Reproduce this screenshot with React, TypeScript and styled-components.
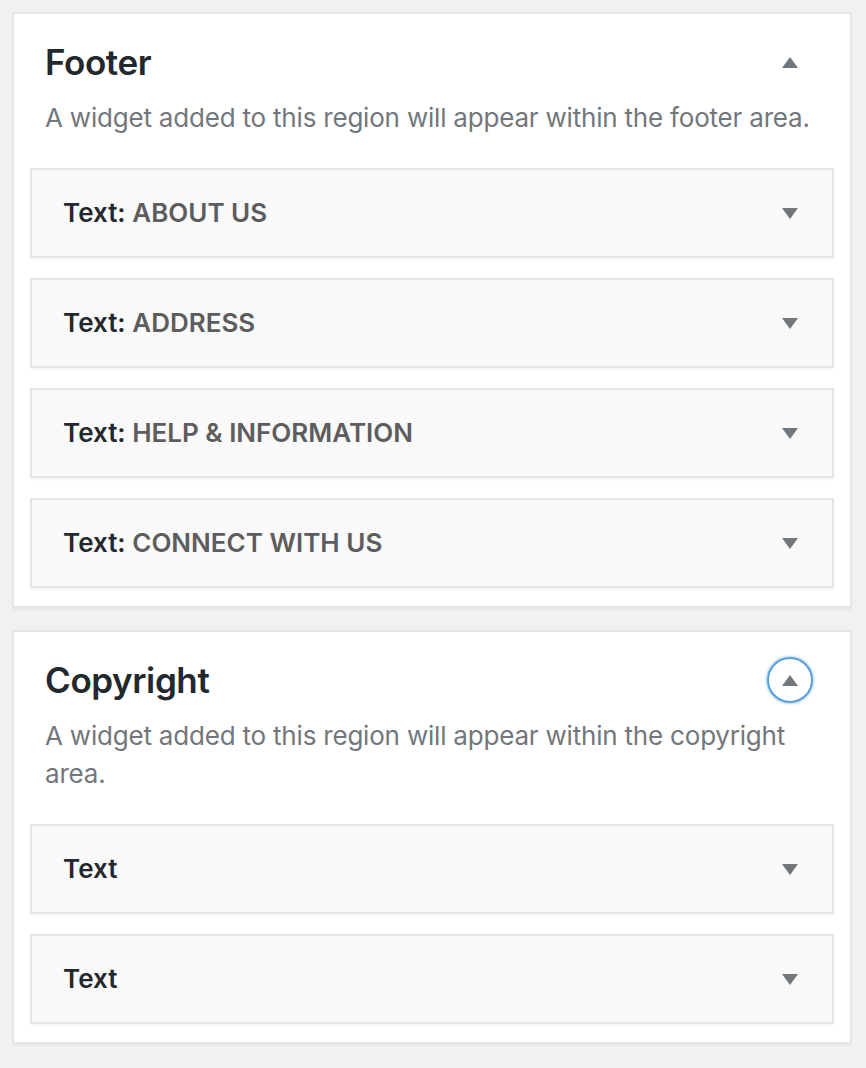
import React from 'react';
import styled, { createGlobalStyle } from 'styled-components';

const GlobalStyle = createGlobalStyle`
  html, body {
    margin: 0;
    padding: 0;
    background: #f1f1f1;
  }
  body {
    font-family: Inter, "Liberation Sans", sans-serif;
    -webkit-font-smoothing: antialiased;
  }
`;

const Sidebar = styled.div`
  padding: 12px 14px 22px 12px;
  display: flex;
  flex-direction: column;
  gap: 22px;
`;

const Section = styled.section`
  background: #fff;
  border: 2px solid #e5e5e5;
  box-shadow: 0 2px 2px rgba(0, 0, 0, 0.04);
  padding: 0 16px 18px;
`;

const SectionHeader = styled.div`
  padding: 25px 15px 31px;
`;

const TitleRow = styled.div`
  display: flex;
  align-items: center;
  justify-content: space-between;
`;

const Title = styled.h3`
  margin: 0;
  font-size: 35px;
  line-height: 44px;
  font-weight: 600;
  letter-spacing: -0.4px;
  color: #23282d;
`;

const Description = styled.p`
  margin: 14px 0 0;
  font-size: 26px;
  line-height: 38px;
  letter-spacing: -0.2px;
  color: #72777c;
`;

const ToggleButton = styled.button<{ $focused?: boolean }>`
  width: 46px;
  height: 46px;
  margin-right: 6px;
  padding: 0;
  border-radius: 50%;
  background: transparent;
  border: 2px solid ${p => (p.$focused ? '#5b9dd9' : 'transparent')};
  box-shadow: ${p => (p.$focused ? '0 0 3px rgba(30, 140, 190, 0.8)' : 'none')};
  display: flex;
  align-items: center;
  justify-content: center;
  cursor: pointer;
`;

const WidgetList = styled.div`
  display: flex;
  flex-direction: column;
  gap: 20px;
`;

const Widget = styled.div`
  height: 90px;
  box-sizing: border-box;
  border: 2px solid #e5e5e5;
  background: #f9f9f9;
  box-shadow: 0 2px 2px rgba(0, 0, 0, 0.04);
  display: flex;
  align-items: center;
  justify-content: space-between;
  padding: 0 34px 0 31px;
`;

const WidgetTitle = styled.h4`
  margin: 0;
  font-size: 26px;
  line-height: 32px;
  font-weight: 600;
  color: #23282d;
`;

const InWidgetTitle = styled.span`
  color: #5d5d5d;
`;

const Arrow = ({ up }: { up?: boolean }) => (
  <svg width="16" height="11" viewBox="0 0 16 11">
    <polygon points={up ? '8,0 16,11 0,11' : '0,0 16,0 8,11'} fill="#72777c" />
  </svg>
);

type WidgetItem = { label?: string };

const sections: { title: string; description: string; focused?: boolean; widgets: WidgetItem[] }[] = [
  {
    title: 'Footer',
    description: 'A widget added to this region will appear within the footer area.',
    widgets: [
      { label: 'ABOUT US' },
      { label: 'ADDRESS' },
      { label: 'HELP & INFORMATION' },
      { label: 'CONNECT WITH US' },
    ],
  },
  {
    title: 'Copyright',
    description: 'A widget added to this region will appear within the copyright area.',
    focused: true,
    widgets: [{}, {}],
  },
];

const App = () => (
  <>
    <GlobalStyle />
    <Sidebar>
      {sections.map(section => (
        <Section key={section.title}>
          <SectionHeader>
            <TitleRow>
              <Title>{section.title}</Title>
              <ToggleButton $focused={section.focused} aria-label="Collapse">
                <Arrow up />
              </ToggleButton>
            </TitleRow>
            <Description>{section.description}</Description>
          </SectionHeader>
          <WidgetList>
            {section.widgets.map((w, i) => (
              <Widget key={i}>
                <WidgetTitle>
                  Text{w.label && ':'}
                  {w.label && <InWidgetTitle> {w.label}</InWidgetTitle>}
                </WidgetTitle>
                <Arrow />
              </Widget>
            ))}
          </WidgetList>
        </Section>
      ))}
    </Sidebar>
  </>
);

export default App;
